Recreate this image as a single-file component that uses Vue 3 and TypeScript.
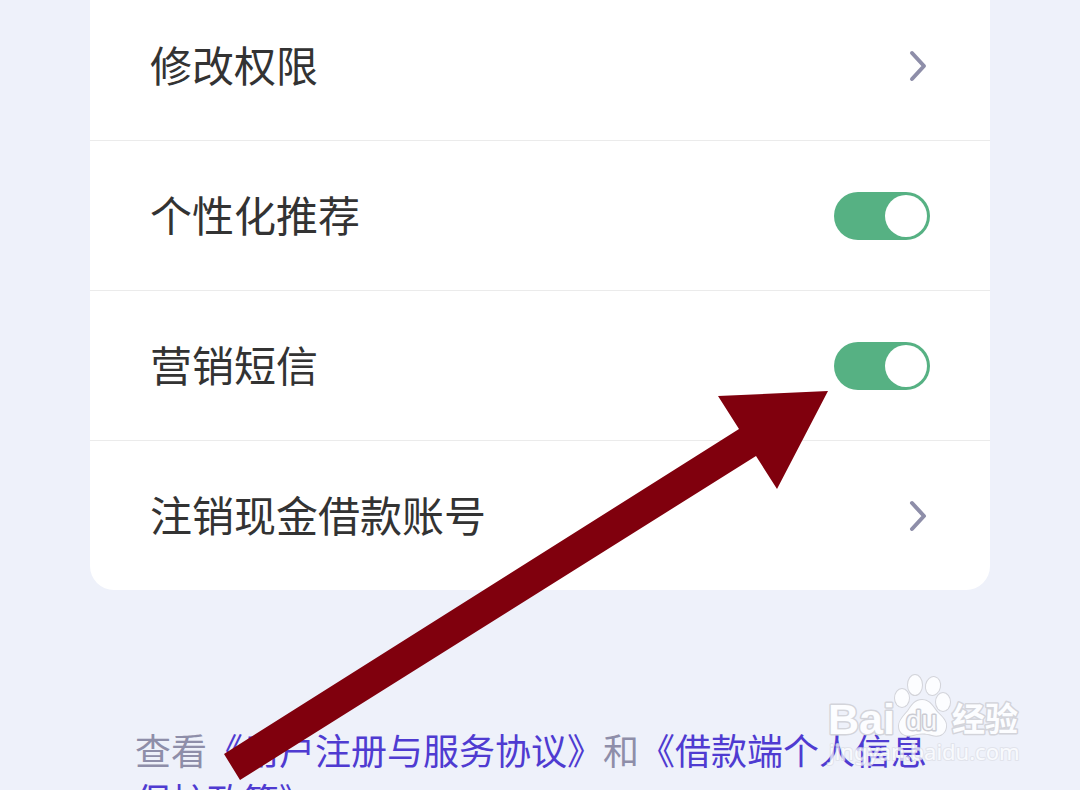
<script setup lang="ts">
import { reactive } from 'vue'

interface Row {
  id: string
  label: string
  kind: 'link' | 'switch'
}

const rows: Row[] = [
  { id: 'permissions', label: '修改权限', kind: 'link' },
  { id: 'personalized', label: '个性化推荐', kind: 'switch' },
  { id: 'marketing', label: '营销短信', kind: 'switch' },
  { id: 'close-account', label: '注销现金借款账号', kind: 'link' },
]

const enabled = reactive<Record<string, boolean>>({
  personalized: true,
  marketing: true,
})
</script>

<template>
  <main class="page">
    <ul class="card">
      <li v-for="row in rows" :key="row.id" class="item">
        <button v-if="row.kind === 'link'" type="button" class="row">
          <span class="label">{{ row.label }}</span>
          <svg class="chevron" viewBox="0 0 24 36" aria-hidden="true">
            <path d="M6 5 L18 18 L6 31" />
          </svg>
        </button>
        <label v-else class="row" :for="row.id">
          <span class="label">{{ row.label }}</span>
          <input :id="row.id" v-model="enabled[row.id]" type="checkbox" role="switch" class="switch" />
        </label>
      </li>
    </ul>

    <p class="terms">查看<a href="#register">《用户注册与服务协议》</a>和<a href="#privacy">《借款端个人信息保护政策》</a></p>

    <svg class="arrow" viewBox="0 0 606 390" aria-hidden="true">
      <path d="M605 0 L554 98 L533 65 L17 389 L1 363 L516 38 L495 5 Z" />
    </svg>

    <svg class="watermark" viewBox="0 0 200 100" role="img" aria-label="Baidu 经验 jingyan.baidu.com">
      <g class="mark">
        <text x="3" y="64" class="brand">Bai</text>
        <ellipse cx="77" cy="28" rx="7" ry="9" />
        <ellipse cx="90" cy="15" rx="7" ry="10" />
        <ellipse cx="108" cy="16" rx="7" ry="9" transform="rotate(12 108 16)" />
        <ellipse cx="118" cy="32" rx="7" ry="9" />
        <path d="M97 30 C105 30 108 37 112 42 C117 47 122 51 121 57 C120 65 113 67 107 65 C100 63 94 63 88 65 C81 67 74 64 74 56 C74 50 79 46 83 41 C87 35 90 30 97 30 Z" />
        <text x="81" y="60" class="du">du</text>
        <text x="127" y="61" class="cn">经验</text>
        <text x="4" y="90" class="site">jingyan.baidu.com</text>
      </g>
    </svg>
  </main>
</template>

<style>
body {
  margin: 0;
  background: #eef1fa;
}
</style>

<style scoped>
.page {
  position: relative;
  box-sizing: border-box;
  height: 100vh;
  overflow: hidden;
  padding: 0 90px;
  background: #eef1fa;
  font-family: "Noto Sans CJK SC", sans-serif;
  font-weight: 400;
}

.card {
  list-style: none;
  margin: -10px 0 0;
  padding: 0;
  background: #fff;
  border-radius: 0 0 24px 24px;
}

.item {
  border-top: 1px solid #ebebeb;
}

.row {
  box-sizing: border-box;
  display: flex;
  align-items: center;
  justify-content: space-between;
  width: 100%;
  min-height: 149px;
  padding: 0 60px;
  border: 0;
  background: none;
  color: #333;
  font: inherit;
  font-size: 42px;
  line-height: 60px;
  text-align: left;
  cursor: pointer;
}

.label {
  padding-bottom: 4px;
}

.chevron {
  width: 24px;
  height: 36px;
  fill: none;
  stroke: #8e8ea9;
  stroke-width: 4;
  stroke-linecap: round;
  stroke-linejoin: round;
}

.switch {
  appearance: none;
  display: flex;
  align-items: center;
  box-sizing: border-box;
  width: 96px;
  height: 48px;
  margin: 0;
  padding: 3px;
  border-radius: 24px;
  background: #ccc;
  cursor: pointer;
}

.switch::before {
  content: "";
  width: 42px;
  height: 42px;
  border-radius: 50%;
  background: #fff;
}

.switch:checked {
  justify-content: flex-end;
  background: #56b183;
}

.terms {
  margin: 134px 0 0;
  padding: 0 45px;
  color: #8e8ea9;
  font-size: 36px;
  line-height: 50px;
}

.terms a {
  color: #4f3bd1;
  text-decoration: none;
}

.arrow {
  position: absolute;
  left: 223px;
  top: 391px;
  width: 606px;
  height: 390px;
  fill: #80000d;
  pointer-events: none;
}

.watermark {
  position: absolute;
  left: 825px;
  top: 670px;
  width: 200px;
  height: 100px;
  pointer-events: none;
}

.mark {
  fill: #fcfdff;
  stroke: #d3d4da;
  stroke-width: 2;
  stroke-linejoin: round;
  paint-order: stroke;
}

.brand {
  font-family: "Liberation Sans", sans-serif;
  font-size: 43px;
  font-weight: 700;
  stroke-width: 3;
}

.du {
  font-family: "Liberation Sans", sans-serif;
  font-size: 28px;
  font-weight: 400;
  fill: #f8f9fc;
  stroke: #cbccd3;
  stroke-width: 3;
}

.cn {
  font-family: "Noto Sans CJK SC", sans-serif;
  font-size: 33px;
  font-weight: 700;
  stroke-width: 3;
}

.site {
  font-family: "Noto Sans", sans-serif;
  font-size: 22px;
  font-weight: 400;
  stroke: #dddfe7;
  opacity: 0.75;
}
</style>
